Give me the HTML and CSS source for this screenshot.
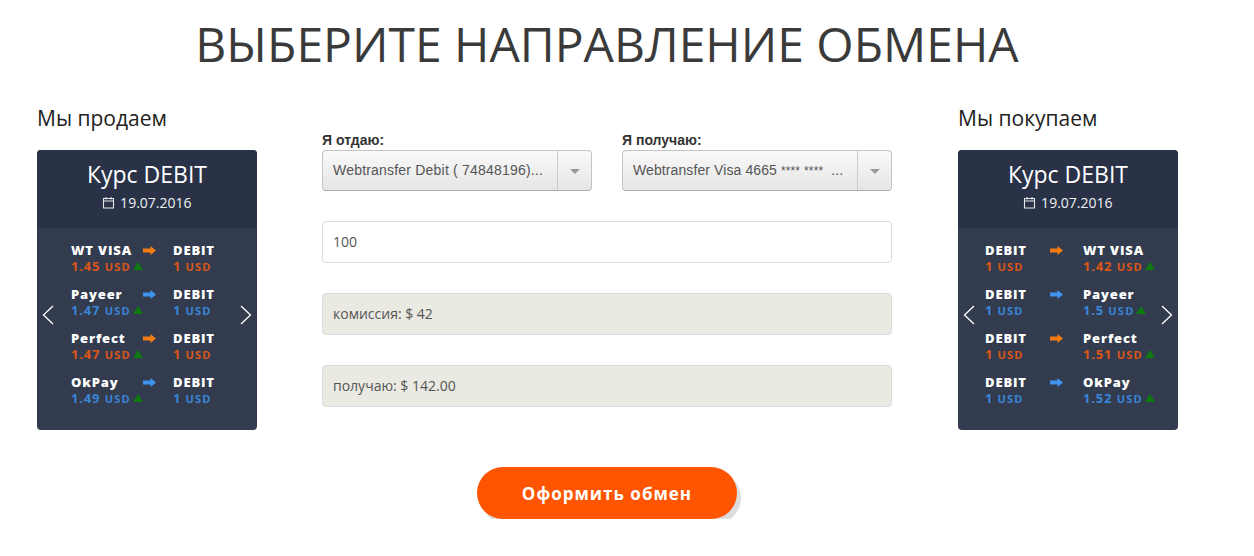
FILE: index.html
```html
<!DOCTYPE html>
<html lang="ru">
  <head>
    <meta charset="UTF-8" />
    <title>Выберите направление обмена</title>
    <link rel="stylesheet" href="styles.css">
  </head>
  <body>
    <div class="page">
      <h1>Выберите направление обмена</h1>
      <div class="exchange">
        <div class="side">
          <h2>Мы продаем</h2>
          <div class="card">
            <div class="card-head">
              <div class="card-title">Курс DEBIT</div>
              <div class="card-date">
                <svg class="cal" viewBox="0 0 13 13"><path d="M1.500 2.500h10v9.500h-10zM1.500 5h10M4 1v2.500M9 1v2.500" /></svg>
                19.07.2016
              </div>
            </div>
            <div class="card-body sell">
              <svg class="nav nav-left" viewBox="0 0 12 20"><path d="M11 1L1.500 10l9.500 9" /></svg>
              <svg class="nav nav-right" viewBox="0 0 12 20"><path d="M1 1l9.500 9L1 19" /></svg>
              <div class="rate orange">
                <div><b>WT VISA</b><span>1.45 <small>USD</small><i class="up"></i></span></div>
                <svg class="arrow" viewBox="0 0 13 9"><path d="M0 2.500h7.500V0L13 4.500 7.500 9V6.500H0z" /></svg>
                <div><b>DEBIT</b><span>1 <small>USD</small></span></div>
              </div>
              <div class="rate blue">
                <div><b>Payeer</b><span>1.47 <small>USD</small><i class="up"></i></span></div>
                <svg class="arrow" viewBox="0 0 13 9"><path d="M0 2.500h7.500V0L13 4.500 7.500 9V6.500H0z" /></svg>
                <div><b>DEBIT</b><span>1 <small>USD</small></span></div>
              </div>
              <div class="rate orange">
                <div><b>Perfect</b><span>1.47 <small>USD</small><i class="up"></i></span></div>
                <svg class="arrow" viewBox="0 0 13 9"><path d="M0 2.500h7.500V0L13 4.500 7.500 9V6.500H0z" /></svg>
                <div><b>DEBIT</b><span>1 <small>USD</small></span></div>
              </div>
              <div class="rate blue">
                <div><b>OkPay</b><span>1.49 <small>USD</small><i class="up"></i></span></div>
                <svg class="arrow" viewBox="0 0 13 9"><path d="M0 2.500h7.500V0L13 4.500 7.500 9V6.500H0z" /></svg>
                <div><b>DEBIT</b><span>1 <small>USD</small></span></div>
              </div>
            </div>
          </div>
        </div>

        <div class="center">
          <div class="selects">
            <div class="select-group">
              <label>Я отдаю:</label>
              <div class="select">
                <div class="select-text">Webtransfer Debit ( 74848196)...</div>
                <div class="select-btn"><i class="caret"></i></div>
              </div>
            </div>
            <div class="select-group">
              <label>Я получаю:</label>
              <div class="select">
                <div class="select-text visa">Webtransfer Visa 4665 <span class="stars">****</span> <span class="stars">****</span> &nbsp;...</div>
                <div class="select-btn"><i class="caret"></i></div>
              </div>
            </div>
          </div>
          <div class="field">100</div>
          <div class="field readonly">комиссия: $ 42</div>
          <div class="field readonly">получаю: $ 142.00</div>
        </div>

        <div class="side">
          <h2>Мы покупаем</h2>
          <div class="card">
            <div class="card-head">
              <div class="card-title">Курс DEBIT</div>
              <div class="card-date">
                <svg class="cal" viewBox="0 0 13 13"><path d="M1.500 2.500h10v9.500h-10zM1.500 5h10M4 1v2.500M9 1v2.500" /></svg>
                19.07.2016
              </div>
            </div>
            <div class="card-body buy">
              <svg class="nav nav-left" viewBox="0 0 12 20"><path d="M11 1L1.500 10l9.500 9" /></svg>
              <svg class="nav nav-right" viewBox="0 0 12 20"><path d="M1 1l9.500 9L1 19" /></svg>
              <div class="rate orange">
                <div><b>DEBIT</b><span>1 <small>USD</small></span></div>
                <svg class="arrow" viewBox="0 0 13 9"><path d="M0 2.500h7.500V0L13 4.500 7.500 9V6.500H0z" /></svg>
                <div><b>WT VISA</b><span>1.42 <small>USD</small><i class="up"></i></span></div>
              </div>
              <div class="rate blue">
                <div><b>DEBIT</b><span>1 <small>USD</small></span></div>
                <svg class="arrow" viewBox="0 0 13 9"><path d="M0 2.500h7.500V0L13 4.500 7.500 9V6.500H0z" /></svg>
                <div><b>Payeer</b><span>1.5 <small>USD</small><i class="up"></i></span></div>
              </div>
              <div class="rate orange">
                <div><b>DEBIT</b><span>1 <small>USD</small></span></div>
                <svg class="arrow" viewBox="0 0 13 9"><path d="M0 2.500h7.500V0L13 4.500 7.500 9V6.500H0z" /></svg>
                <div><b>Perfect</b><span>1.51 <small>USD</small><i class="up"></i></span></div>
              </div>
              <div class="rate blue">
                <div><b>DEBIT</b><span>1 <small>USD</small></span></div>
                <svg class="arrow" viewBox="0 0 13 9"><path d="M0 2.500h7.500V0L13 4.500 7.500 9V6.500H0z" /></svg>
                <div><b>OkPay</b><span>1.52 <small>USD</small><i class="up"></i></span></div>
              </div>
            </div>
          </div>
        </div>
      </div>
      <div class="actions">
        <button class="submit">Оформить обмен</button>
      </div>
    </div>
  </body>
</html>
```

FILE: styles.css
```css
body {
  margin: 0;
  background: #ffffff;
  font-family: "Open Sans", sans-serif;
  color: #333;
}

.page {
  width: 1214px;
}

h1 {
  margin: 0;
  padding-top: 13px;
  text-align: center;
  font-size: 48px;
  line-height: 62px;
  font-weight: 400;
  text-transform: uppercase;
  color: #3a3a3a;
}

.exchange {
  display: grid;
  grid-template-columns: 220px 571px 220px;
  column-gap: 65px;
  padding: 29px 0 0 37px;
}

.side h2 {
  margin: 0 0 18px;
  font-size: 21px;
  line-height: 28px;
  font-weight: 400;
  color: #222;
}

.card {
  height: 280px;
  border-radius: 4px;
  background: #323c4e;
  color: #fff;
  overflow: hidden;
}

.card-head {
  height: 78px;
  background: #293246;
  border-radius: 0 0 4px 4px;
  text-align: center;
}

.card-title {
  padding-top: 7px;
  font-size: 23px;
  line-height: 34px;
}

.card-date {
  font-size: 14px;
  line-height: 20px;
  margin-top: 2px;
  color: #eef0f3;
}

.cal {
  width: 13px;
  height: 13px;
  margin-right: 1px;
  vertical-align: -1px;
  fill: none;
  stroke: #e6e8ec;
  stroke-width: 1.1;
}

.card-body {
  position: relative;
  padding-top: 14px;
}

.sell {
  padding-left: 34px;
}

.buy {
  padding-left: 27px;
}

.nav {
  position: absolute;
  top: 77px;
  width: 12px;
  height: 20px;
  fill: none;
  stroke: #fff;
  stroke-width: 1.3;
}

.nav-left {
  left: 5px;
}

.nav-right {
  right: 5px;
}

.rate {
  display: grid;
  align-items: start;
  height: 44px;
  font-size: 13px;
  line-height: 16px;
  letter-spacing: 0.85px;
}

.sell .rate {
  grid-template-columns: 72px 30px 1fr;
}

.buy .rate {
  grid-template-columns: 65px 33px 1fr;
}

.rate b {
  display: block;
  font-weight: 800;
  white-space: nowrap;
}

.rate span {
  display: block;
  font-weight: 700;
  white-space: nowrap;
}

.rate small {
  font-size: 11px;
  letter-spacing: 1.2px;
}

.orange span {
  color: #dd5519;
}

.blue span {
  color: #3a84d6;
}

.arrow {
  width: 13px;
  height: 9px;
  margin-top: 4px;
}

.orange .arrow {
  fill: #f47b13;
}

.blue .arrow {
  fill: #3d95f0;
}

.up {
  display: inline-block;
  margin-left: 2px;
  border-left: 5px solid transparent;
  border-right: 5px solid transparent;
  border-bottom: 8px solid #0d7a12;
  vertical-align: 1px;
}

.selects {
  display: grid;
  grid-template-columns: 270px 270px;
  column-gap: 30px;
  padding-top: 27px;
  margin-bottom: 30px;
}

.select-group label {
  display: block;
  font-family: "Liberation Sans", sans-serif;
  font-size: 14px;
  line-height: 19px;
  font-weight: 700;
  color: #333;
}

.select {
  display: flex;
  height: 41px;
  box-sizing: border-box;
  border: 1px solid #c4c4c4;
  border-bottom-color: #adadad;
  border-radius: 4px;
  background: linear-gradient(#f9f9f9, #e6e6e6);
  font-family: "Liberation Sans", sans-serif;
}

.select-text {
  flex: 1;
  padding-left: 10px;
  font-size: 14px;
  line-height: 38px;
  letter-spacing: 0.2px;
  color: #555;
  white-space: nowrap;
  overflow: hidden;
}

.visa {
  letter-spacing: 0.1px;
}

.stars {
  font-size: 12px;
}

.select-btn {
  width: 33px;
  display: flex;
  align-items: center;
  justify-content: center;
  border-left: 1px solid #ccc;
}

.caret {
  border-left: 5px solid transparent;
  border-right: 5px solid transparent;
  border-top: 5px solid #999;
  margin-top: 2px;
}

.field {
  width: 570px;
  height: 42px;
  box-sizing: border-box;
  margin-bottom: 30px;
  padding-left: 10px;
  border: 1px solid #dcdcdc;
  border-radius: 4px;
  font-size: 14px;
  line-height: 40px;
  color: #555;
  background: #fff;
}

.field:last-child {
  margin-bottom: 0;
}

.readonly {
  background: #eae9e2;
}

.actions {
  display: flex;
  justify-content: center;
  padding-top: 37px;
}

.submit {
  width: 260px;
  height: 52px;
  border: none;
  border-radius: 26px;
  background: #ff5500;
  box-shadow: 4px 5px 0 #dddddd;
  color: #fff;
  font-family: "Open Sans", sans-serif;
  font-size: 17px;
  font-weight: 700;
  letter-spacing: 1px;
}
```
